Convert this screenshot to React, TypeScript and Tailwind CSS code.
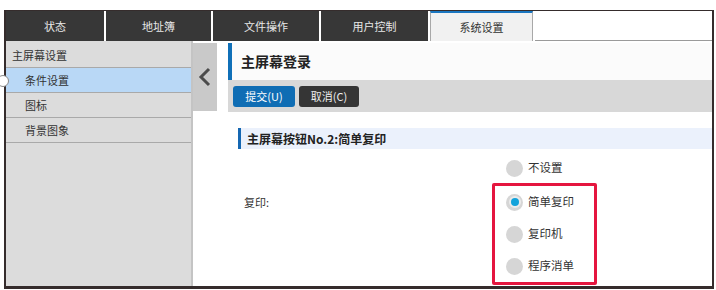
import React from "react";

const font = { fontFamily: '"Noto Sans CJK SC", "Noto Sans", sans-serif' };

const tabs = [
  { label: "状态", w: "w-[98px]" },
  { label: "地址簿", w: "w-[105px]" },
  { label: "文件操作", w: "w-[106px]" },
  { label: "用户控制", w: "w-[107px]" },
];

const menu = [
  { label: "主屏幕设置", indent: false, active: false },
  { label: "条件设置", indent: true, active: true },
  { label: "图标", indent: true, active: false },
  { label: "背景图象", indent: true, active: false },
];

function Radio({ checked }: { checked?: boolean }) {
  return (
    <div className="w-[17px] h-[17px] rounded-full bg-[#d6d6d6] flex items-center justify-center">
      {checked && (
        <div className="w-[12px] h-[12px] rounded-full bg-[#ececec] flex items-center justify-center">
          <div className="w-[8px] h-[8px] rounded-full bg-[#13a3db]" />
        </div>
      )}
    </div>
  );
}

function Option({ label, checked }: { label: string; checked?: boolean }) {
  return (
    <div className="h-[32px] flex items-center gap-[5px] pl-[11px]">
      <Radio checked={checked} />
      <span className="text-[11.5px] text-[#333]">{label}</span>
    </div>
  );
}

export default function App() {
  return (
    <div className="w-[716px] h-[290px] bg-white overflow-hidden pt-[10px] pl-[4px]" style={font}>
      <div className="w-[710px] h-[279px] border-l-2 border-r-2 border-t border-b-[3px] border-[#352c2c] flex flex-col">
        {/* tabs */}
        <div className="h-[30px] flex gap-[2px] bg-white shrink-0">
          {tabs.map((t) => (
            <div
              key={t.label}
              className={`${t.w} bg-[#373737] text-[#e8e8e8] text-[11px] flex items-center justify-center`}
            >
              {t.label}
            </div>
          ))}
          <div className="w-[103px] bg-[#f1f1f1] border-t-2 border-[#1a76c0] border-x border-x-[#a8a8a8] text-[#333] text-[11px] flex items-center justify-center">
            系统设置
          </div>
          <div className="flex-1 border-b border-[#9a9a9a]" />
        </div>

        {/* body */}
        <div className="flex-1 flex">
          {/* left menu */}
          <div className="w-[187px] bg-[#dcdcdc] border-r-2 border-[#c4c4c4] pt-[2px] relative">
            {menu.map((m) => (
              <div
                key={m.label}
                className={`h-[25px] flex items-center border-b border-[#a9a9a9] text-[11px] text-[#333] ${
                  m.indent ? "pl-[19px]" : "pl-[6px]"
                } ${m.active ? "bg-[#b9d8f6]" : ""}`}
              >
                {m.label}
              </div>
            ))}
            <div className="absolute left-[-9px] top-[34px] w-[12px] h-[12px] rounded-full bg-white border border-[#8a8a8a]" />
          </div>

          {/* collapse button */}
          <div className="pt-[2px]">
            <div className="w-[24px] h-[68px] bg-[#c9c9c9] flex items-center justify-center">
              <svg width="14" height="20" viewBox="0 0 14 20">
                <polyline points="11,2 3,10 11,18" fill="none" stroke="#4b4b4b" strokeWidth="3" />
              </svg>
            </div>
          </div>

          {/* main */}
          <div className="flex-1 ml-[11px] pt-[2px] flex flex-col">
            <div className="h-[37px] bg-[#fbfbfb] border-l-[4px] border-[#1070b8] flex items-center pl-[9px] text-[14px] font-bold text-[#222]">
              主屏幕登录
            </div>
            <div className="h-[32px] bg-[#d8d8d8] flex items-center gap-[4px] pl-[5px]">
              <button className="w-[62px] h-[21px] rounded-[3px] bg-[#0f6db4] text-white text-[11px]">
                提交(U)
              </button>
              <button className="w-[60px] h-[21px] rounded-[3px] bg-[#353535] text-[#eee] text-[11px]">
                取消(C)
              </button>
            </div>
            <div className="mt-[16px] ml-[10px] h-[21px] bg-[#ebf1fc] border-l-[3px] border-[#1567b2] flex items-center pl-[6px] text-[12px] font-bold text-[#222]">
              主屏幕按钮No.2:简单复印
            </div>
            <div className="flex">
              <div className="w-[264px] pt-[37px] pl-[16px]">
                <div className="h-[32px] flex items-center text-[11px] text-[#333]">复印:</div>
              </div>
              <div className="flex flex-col pt-[4px]">
                <div className="h-[30px] flex items-center gap-[5px] pl-[14px]">
                  <Radio />
                  <span className="text-[11.5px] text-[#333]">不设置</span>
                </div>
                <div className="w-[105px] border-[3px] border-[#e5163f] rounded-[2px]">
                  <Option label="简单复印" checked />
                  <Option label="复印机" />
                  <Option label="程序消单" />
                </div>
              </div>
            </div>
          </div>
        </div>
      </div>
    </div>
  );
}
